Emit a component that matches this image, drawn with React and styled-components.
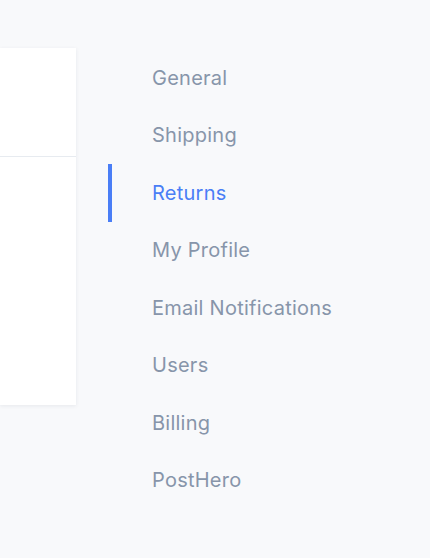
import React from "react";
import styled, { createGlobalStyle } from "styled-components";

const Global = createGlobalStyle`
  html, body { margin: 0; padding: 0; background: #f8f9fb; }
  body { font-family: Inter, Lato, sans-serif; }
`;

const Page = styled.div`
  display: flex;
  align-items: flex-start;
  gap: 32px;
  padding-top: 48px;
  height: 558px;
  box-sizing: border-box;
  overflow: hidden;
`;

const Card = styled.div`
  width: 76px;
  height: 357px;
  background: #fff;
  box-shadow: 0 1px 4px rgba(30, 40, 70, 0.08);
  display: flex;
  flex-direction: column;
`;

const CardHeader = styled.div`
  height: 108px;
  border-bottom: 1px solid #e7ebf0;
`;

const Nav = styled.nav`
  display: flex;
  flex-direction: column;
  padding-top: 1px;
`;

const NavItem = styled.div`
  height: 57.5px;
  display: flex;
  align-items: center;
  padding-left: 40px;
  box-sizing: border-box;
  border-left: 4px solid ${(p) => (p.$active ? "#4a7ef6" : "transparent")};
  color: ${(p) => (p.$active ? "#4a7ef6" : "#8795aa")};
  font-size: 20px;
  letter-spacing: 0.25px;
  white-space: nowrap;
`;

const items = [
  "General",
  "Shipping",
  "Returns",
  "My Profile",
  "Email Notifications",
  "Users",
  "Billing",
  "PostHero",
];

export default function App() {
  return (
    <>
      <Global />
      <Page>
        <Card>
          <CardHeader />
        </Card>
        <Nav>
          {items.map((it) => (
            <NavItem key={it} $active={it === "Returns"}>
              {it}
            </NavItem>
          ))}
        </Nav>
      </Page>
    </>
  );
}
